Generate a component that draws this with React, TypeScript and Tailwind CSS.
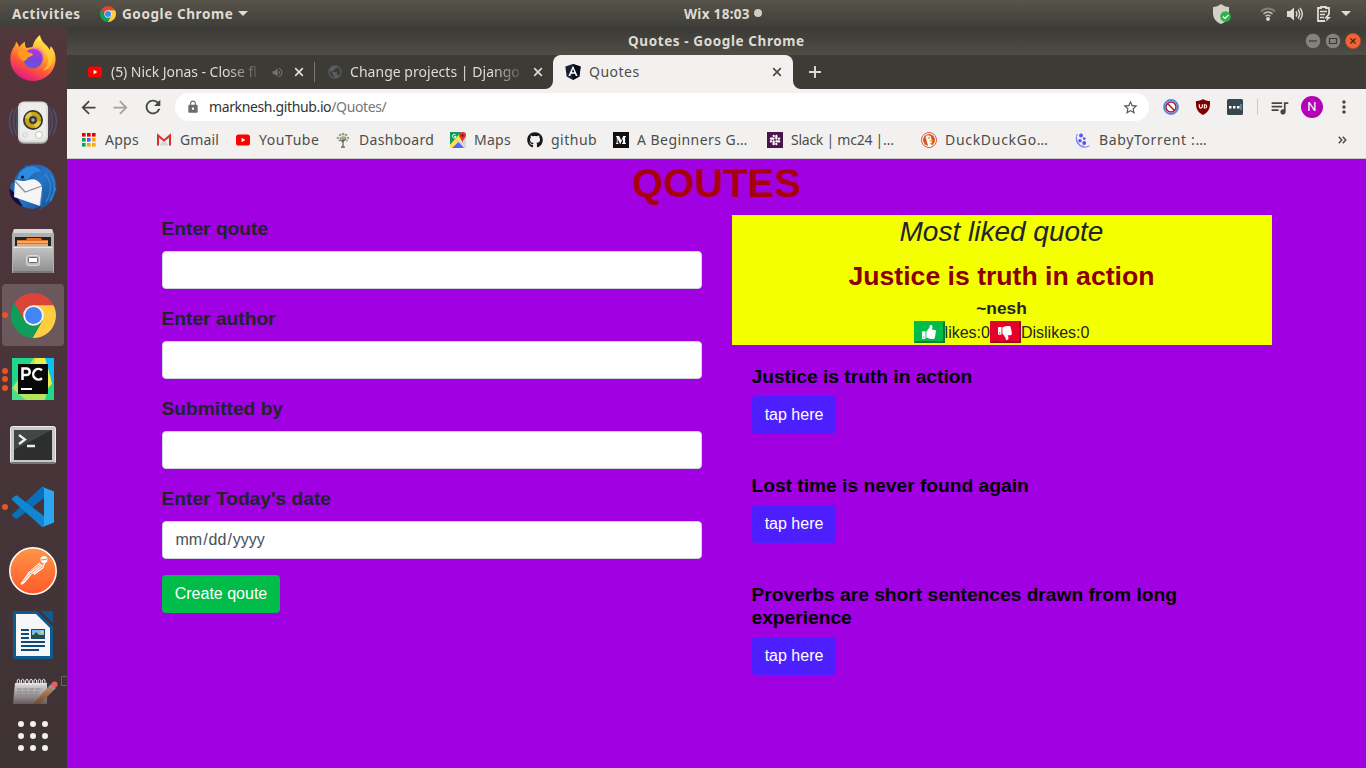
import React from "react";
import { FaGithub, FaSlack, FaThumbsUp, FaThumbsDown } from "react-icons/fa";
import { MdArrowBack, MdArrowForward, MdRefresh, MdLock, MdStarBorder, MdMoreVert, MdQueueMusic, MdVolumeUp, MdPublic } from "react-icons/md";

type IconProps = { size: number };

const Chrome = ({ size }: IconProps) => (
  <svg width={size} height={size} viewBox="0 0 48 48">
    <path d="M14.5 29.5 3.8 11A24 24 0 0 1 45.3 13H24Z" fill="#db4437" />
    <path d="M24 13H45.3A24 24 0 0 1 22.9 48L33.5 29.5Z" fill="#ffcd40" />
    <path d="M33.5 29.5 22.9 48A24 24 0 0 1 3.8 11L14.5 29.5Z" fill="#0f9d58" />
    <circle cx="24" cy="24" r="11" fill="#f4f4f4" />
    <circle cx="24" cy="24" r="9" fill="#4285f4" />
  </svg>
);

const YouTube = () => (
  <svg width="16" height="16" viewBox="0 0 16 16">
    <rect x="1" y="2.5" width="14" height="11" rx="2.6" fill="#f00" />
    <path d="M6.6 5.8v4.4L10.4 8z" fill="#fff" />
  </svg>
);

const Angular = () => (
  <svg width="16" height="16" viewBox="0 0 16 16">
    <path d="M8 0 15.6 2.6 14.4 12.6 8 16 1.6 12.6.4 2.6Z" fill="#1b1f33" />
    <path d="M8 0 15.6 2.6 14.4 12.6 8 16Z" fill="#090c18" />
    <path d="M8 1.8 3.4 12h1.8l.9-2.3h3.8l.9 2.3h1.8ZM8 5.1 9.3 8.2H6.7Z" fill="#fff" fillRule="evenodd" />
  </svg>
);

const AppsGrid = () => (
  <svg width="14" height="14" viewBox="0 0 14 14">
    {["#e60000", "#e60000", "#e60000", "#00a651", "#4d5bf9", "#f5a800", "#00a651", "#f5a800", "#f5a800"].map((c, i) => (
      <rect key={i} x={(i % 3) * 5} y={Math.floor(i / 3) * 5} width="3.6" height="3.6" fill={c} />
    ))}
  </svg>
);

const Gmail = () => (
  <svg width="16" height="16" viewBox="0 0 16 16">
    <path d="M1 2.5h14v11H1z" fill="#ededed" />
    <path d="m3 13.5 5-5 5 5z" fill="#d5d5d5" />
    <path d="M2 13.5V3.500l6 5 6-5v10" fill="none" stroke="#d93025" strokeWidth="2" />
  </svg>
);

const Tree = () => (
  <svg width="16" height="16" viewBox="0 0 16 16">
    <path d="M8 6v9M8 10 5 7.500M8 9.500l3-3M6 15.200h4" stroke="#5f5b49" strokeWidth="1.200" fill="none" />
    <g fill="#94a582">
      <circle cx="8" cy="2.200" r="1.400" /><circle cx="5" cy="3" r="1.200" /><circle cx="11" cy="3" r="1.300" />
      <circle cx="2.800" cy="6" r="1.200" /><circle cx="5.800" cy="6" r="1.200" /><circle cx="10" cy="5.800" r="1.200" /><circle cx="13" cy="6" r="1.200" />
      <circle cx="4.400" cy="8.600" r="1" /><circle cx="11.800" cy="8.600" r="1" /><circle cx="8" cy="5" r="1" />
    </g>
  </svg>
);

const Maps = () => (
  <svg width="16" height="16" viewBox="0 0 16 16">
    <rect width="16" height="16" rx="1" fill="#d8d8d8" />
    <path d="M0 0h11L0 13z" fill="#0f9d58" />
    <path d="M0 13 11 1l3 3L2 16H0z" fill="#ffe14d" />
    <path d="m2 16 6.5-6L14 16z" fill="#5a63f7" />
    <path d="M12.5 0A3.5 3.5 0 0 1 16 3.6C16 6 13 7 12.5 11 12 7 9 6 9 3.6A3.5 3.5 0 0 1 12.5 0Z" fill="#e0352b" />
    <circle cx="12.5" cy="3.5" r="1.2" fill="#7d1a14" />
    <path d="M5.6 3A1.8 1.8 0 1 0 6 4.5H4.3" stroke="#fff" fill="none" />
  </svg>
);

const Medium = () => (
  <svg width="16" height="16" viewBox="0 0 16 16">
    <rect width="16" height="16" fill="#111" />
    <path d="M3 4h3.2L8.2 8.6 10.2 4H13v.6l-.9.8v5.2l.9.8v.6H9v-.6l.9-.8V6.4L7.4 12H7L4.6 6.4v4l1 1.3v.3H2.8v-.3l1-1.3V5.4L3 4.5z" fill="#fff" />
  </svg>
);

const Duck = () => (
  <svg width="16" height="16" viewBox="0 0 16 16">
    <circle cx="8" cy="8" r="7.5" fill="#fff" stroke="#de5833" />
    <circle cx="8" cy="8" r="6" fill="#de5020" />
    <path d="M5 4c2-1.5 5-.6 5.4 2.4L11 13.6c-2 .8-3 .6-4 .2L5.3 7.5C4.8 6 4.5 5 5 4z" fill="#fff" />
    <path d="M8.3 8.2c2-.8 3.6-.6 4 0-.5.9-2.6.8-3.2 1.6z" fill="#fdb913" />
    <path d="M8.5 11.5 12 11l-.6 2.2z" fill="#3fae49" />
    <circle cx="8" cy="6" r=".7" fill="#334" />
  </svg>
);

const Baby = () => (
  <svg width="16" height="16" viewBox="0 0 16 16">
    <g fill="#5558ec">
      <circle cx="6" cy="3.4" r="2" /><circle cx="5" cy="8.8" r="1.8" /><circle cx="9.2" cy="6.6" r="1.4" /><circle cx="9.2" cy="11" r="2" />
    </g>
    <path d="M2.2 2C-.4 8 3 15 8.6 15.2c2.4.2 4.600-1 6-1.200M1.400 6C2 11.500 5.500 14 9.500 14.400" fill="none" stroke="#7779ef" strokeWidth="1" />
  </svg>
);

const Cross = ({ color }: { color: string }) => (
  <svg width="10" height="10" viewBox="0 0 10 10" className="shrink-0">
    <path d="m1.2 1.2 7.6 7.6M8.8 1.2 1.2 8.8" stroke={color} strokeWidth="1.7" />
  </svg>
);

const Firefox = () => (
  <svg width="48" height="48" viewBox="0 0 48 48">
    <defs>
      <linearGradient id="ff" x1=".8" y1=".1" x2=".35" y2="1">
        <stop offset="0" stopColor="#fff44f" /><stop offset=".35" stopColor="#ffa930" /><stop offset=".65" stopColor="#ff5b36" /><stop offset="1" stopColor="#e31587" />
      </linearGradient>
      <linearGradient id="ffg" x1=".6" y1="0" x2=".3" y2="1">
        <stop offset="0" stopColor="#b833e1" /><stop offset=".5" stopColor="#7d43dc" /><stop offset="1" stopColor="#5a5fdf" />
      </linearGradient>
    </defs>
    <path d="M5.5 12c.8-1 1.200-2.500 1.500-4.500 1.500 1.500 2.600 3.500 3.500 5.500 1.500-2.500 3.200-4 5.500-5.300-.2 2.400 0 4.800 1.500 6.300l6-1C24.500 7.500 27.500 3.500 31 1c1 5.500 3.500 8 6.500 10.500 1.500 1.500 2.500 3 3.200 5l1-4.500C45 16 47 20.500 46.500 26 46 38 36 47 24 47S1.500 37.500 1.300 25.500C1.200 20 3 15.500 5.500 12z" fill="url(#ff)" />
    <path d="M35 16c6 7 5 17-2 21 8-1 13-9 10-18-2-4-7-8-11-14-1 5 1 8 3 11z" fill="#ffd23e" opacity=".65" />
    <circle cx="24" cy="24.500" r="9.800" fill="url(#ffg)" />
    <path d="M9 17c4-2.500 8-.5 10 1 1.500 1.200 4 .6 5 2.200-.4 2-3.500 2.300-5 3.300-1.300 1.500-2 3.500-4.500 3.600C11 26 8 21 9 17z" fill="#ff9a1f" />
    <path d="M22 15c7-2.500 13 3 12 10" fill="none" stroke="#e05be8" strokeWidth="1.800" opacity=".6" />
  </svg>
);

const Rhythmbox = () => (
  <svg width="50" height="48" viewBox="0 0 50 48">
    <g fill="none" stroke="#4c6388" strokeWidth="1.500" opacity=".6">
      <path d="M9 8Q2 22 9 37M5 10Q-2 22 5 36M41 8q7 14 0 29M45 10q7 12 0 26M12 5Q5 22 12 40M38 5q7 17 0 35" />
    </g>
    <rect x="10" y="4" width="30" height="41" rx="6" fill="#8e8e8c" />
    <rect x="10" y="2.500" width="30" height="41" rx="6" fill="#dededc" />
    <rect x="12" y="4" width="26" height="37" rx="5" fill="#ededec" />
    <circle cx="25" cy="21" r="10" fill="#33343a" />
    <circle cx="25" cy="21" r="8.200" fill="#c9a411" />
    <path d="M25 21 17 19a8.200 8.200 0 0 1 6-6zM25 21l8 2a8.200 8.200 0 0 1-6 6z" fill="#e0c84b" />
    <circle cx="25" cy="21" r="4" fill="#34363d" /><circle cx="25" cy="21" r="1.800" fill="#a5a8b0" />
    <circle cx="31" cy="36" r="3.500" fill="#fafafa" stroke="#c3c3c1" /><rect x="15" y="34" width="4" height="4" rx="1" fill="none" stroke="#d0d0ce" />
  </svg>
);

const Thunderbird = () => (
  <svg width="48" height="48" viewBox="0 0 48 48">
    <defs><linearGradient id="tb" x1="0" y1="0" x2="1" y2="1"><stop offset="0" stopColor="#1f4f9c" /><stop offset=".5" stopColor="#2476c9" /><stop offset="1" stopColor="#174b90" /></linearGradient></defs>
    <path d="M14 5 18 1l1 2C30-1 41 4 45 13c5 11 1 24-8 30l-7 4 2-4-8 3C12 45 2 38 1 27l1-6 3-2C6 13 9 8 14 5z" fill="url(#tb)" />
    <path d="M18 4c7-2 12 1 14 5-7-1-9 3-14 8-4-2-7-1-10 0 1-6 5-11 10-13z" fill="#2e8be0" />
    <path d="M1 26c0 9 5 14 12 17l-8-13zM5 33l8 10" fill="#190c42" stroke="#190c42" />
    <path d="m6 17 8 1c5 0 9-3 13-1 4 2 6 5 6 8l-2 18L5 34z" fill="#f5f5f5" />
    <path d="M6 18 16 29 33 23" fill="none" stroke="#8a8f9b" strokeWidth="1.300" />
    <circle cx="13.500" cy="14" r="1.600" fill="#111" />
    <path d="M36 11c7 8 7 18 1 28M42 12c5 9 4 18-1 27M33 30l-2 13M47 25l-6 12" fill="none" stroke="#48a3e8" strokeWidth="1.500" opacity=".5" />
  </svg>
);

const Files = () => (
  <svg width="44" height="46" viewBox="0 0 44 46">
    <defs><linearGradient id="fi" x1="0" y1="0" x2="0" y2="1"><stop offset="0" stopColor="#c6c6c6" /><stop offset="1" stopColor="#929292" /></linearGradient></defs>
    <path d="M3 1h38l2 5v39H1V6z" fill="#b0b0b0" /><path d="M3 1h38l1 4H2z" fill="#d8d8d8" />
    <rect x="4" y="9" width="36" height="11" fill="#29231f" />
    <path d="M6 12h9l1-2h14l1 2h6v8H6z" fill="#e4701e" /><path d="M6 14h31M6 17h31" stroke="#f7dfc1" strokeWidth="1.200" />
    <path d="M2 20 4 18h36l2 2v23H2z" fill="url(#fi)" /><path d="M2 19.500h40" stroke="#e3e3e3" />
    <path d="M2 44h40" stroke="#777" strokeWidth="2" />
    <rect x="15.500" y="27.500" width="13" height="10" rx="2" fill="#bcbcbc" stroke="#dcdcdc" />
    <rect x="17.500" y="29.500" width="9" height="5" rx="1" fill="#fff" stroke="#666" />
  </svg>
);

const PyCharm = () => (
  <svg width="42" height="42" viewBox="0 0 42 42">
    <rect width="42" height="42" fill="#21d789" />
    <path d="M22 0h12l5 20-6 22H0V30z" fill="#b4e35c" />
    <path d="M24 0h10l6 26-6 6-12-26z" fill="#e9ee4a" />
    <path d="M33 0h9v30z" fill="#07c3f2" />
    <path d="M0 30 14 42H0z" fill="#4fdc8a" />
    <rect x="6" y="6" width="30" height="30" fill="#080808" />
    <path d="M10.500 22V10.500h4a3 3 0 0 1 0 6.500h-4M30 12.200a5.300 5.300 0 1 0 0 8" fill="none" stroke="#fff" strokeWidth="2.500" />
    <rect x="9" y="30" width="11" height="2" fill="#fff" />
  </svg>
);

const Terminal = () => (
  <svg width="46" height="40" viewBox="0 0 46 40">
    <rect x=".5" y="1.500" width="45" height="37" rx="2" fill="#c9c9c7" stroke="#ededed" />
    <path d="M1 38h44" stroke="#777" strokeWidth="2" />
    <rect x="4" y="5" width="38" height="30" fill="#2d2e2e" />
    <path d="M4 5h38L4 25z" fill="#444645" />
    <path d="m9 10 6 4.500L9 19M17 21h8" fill="none" stroke="#eee" strokeWidth="2.300" />
  </svg>
);

const VsCode = () => (
  <svg width="42" height="42" viewBox="0 0 42 42">
    <path d="M0 28.500 30 .8Q31.500.2 32 1v11L5 32.800H3.500L0 30z" fill="#0a6fb8" />
    <path d="M0 12.500 3.500 9.500H5L32 30v10.500q-1 .8-2.500 0L0 14z" fill="#1287d1" />
    <path d="M30 .800 42 5.500v31L30 41.200q2-.5 2-2.200V3q0-1.500-2-2.200z" fill="#2aa6f2" />
  </svg>
);

const Postman = () => (
  <svg width="48" height="48" viewBox="0 0 48 48">
    <defs><linearGradient id="pm" x1="0" y1="0" x2="0" y2="1"><stop offset="0" stopColor="#ff9547" /><stop offset="1" stopColor="#ff5a2a" /></linearGradient></defs>
    <circle cx="24" cy="24" r="23.200" fill="url(#pm)" stroke="#fff" strokeWidth="1.500" />
    <circle cx="35" cy="12.500" r="3.500" fill="#fff" /><path d="m32 13 6-1" stroke="#ff7b3c" strokeWidth="1.200" />
    <path d="m30.500 15.500 3.500 3-9.500 8.500-6-1z" fill="#fff" />
    <path d="m19.500 25.500 3.500 1.500-8 9.500-3 1.500-.5-1.500z" fill="#fff" />
    <path d="m20 25.500 12-9M22 26.500l10.500-8.500M14 34.500l8-8.500" stroke="#ff7b3c" strokeWidth=".8" />
    <path d="m25 27.500 9-7 2-6" fill="none" stroke="#fff" strokeWidth="1.300" />
  </svg>
);

const Writer = () => (
  <svg width="40" height="48" viewBox="0 0 40 48">
    <path d="M2 0h22l16 16v30q0 2-2 2H2q-2 0-2-2V2Q0 0 2 0z" fill="#0c5c92" />
    <path d="M28 0h10q2 0 2 2v10z" fill="#0c5c92" />
    <path d="M3 3h20l14 14v28H3z" fill="#f6f6f6" />
    <path d="M8 19h8M8 23h8M8 27h8M8 31h24M8 35h24M8 39h18" stroke="#0f4b76" strokeWidth="2" />
    <rect x="18" y="18" width="14" height="10" fill="#0f4b76" /><rect x="19" y="19" width="12" height="5" fill="#79bde8" />
    <path d="m19 26 4-5 4 4 2-1 2 3v0H19z" fill="#35502b" /><circle cx="29" cy="21" r="1.500" fill="#f2d33b" />
  </svg>
);

const Notes = () => (
  <svg width="46" height="26" viewBox="0 0 46 26">
    <defs>
      <linearGradient id="no" x1="0" y1="0" x2="0" y2="1"><stop offset="0" stopColor="#ddd" /><stop offset="1" stopColor="#655b5d" /></linearGradient>
      <linearGradient id="pe" x1="0" y1="0" x2="0" y2="1"><stop offset="0" stopColor="#c88b55" /><stop offset="1" stopColor="#6d4a33" /></linearGradient>
    </defs>
    <path d="M2 5h32v21H0z" fill="url(#no)" />
    <path d="M4 11h25M4 14h22M4 17h20M4 20h16" stroke="#8b8788" strokeDasharray="5 1" />
    {[0, 1, 2, 3, 4, 5, 6].map((i) => <ellipse key={i} cx={5.5 + i * 4.2} cy="4" rx="1.400" ry="2.800" fill="none" stroke="#eee" />)}
    <path d="M20 26 35 9l5 4-13 13z" fill="url(#pe)" /><path d="m35 9 3-3 5 4-3 3z" fill="#8d9699" /><circle cx="41.500" cy="6.500" r="3" fill="#e5625f" />
  </svg>
);

const dock = [
  { icon: <Firefox />, dots: 0 }, { icon: <Rhythmbox />, dots: 0 }, { icon: <Thunderbird />, dots: 0 }, { icon: <Files />, dots: 0 },
  { icon: <Chrome size={45} />, dots: 1, active: true }, { icon: <PyCharm />, dots: 3 },
  { icon: <Terminal />, dots: 0, pad: "pt-[3px]" }, { icon: <VsCode />, dots: 1 }, { icon: <Postman />, dots: 0 }, { icon: <Writer />, dots: 0 },
];

const bookmarks = [
  { label: "Apps", icon: <AppsGrid />, box: "w-[75px]", text: "tracking-[0.25px]" },
  { label: "Gmail", icon: <Gmail />, box: "w-[79px]", text: "tracking-[0.15px]" },
  { label: "YouTube", icon: <YouTube />, box: "w-[100px]", text: "tracking-[0.55px]" },
  { label: "Dashboard", icon: <Tree />, box: "w-[115px]", text: "tracking-[0.3px]" },
  { label: "Maps", icon: <Maps />, box: "w-[77px]", text: "tracking-[0.25px]" },
  { label: "github", icon: <FaGithub size={16} color="#181717" />, box: "w-[86px]", text: "tracking-[0.5px]" },
  { label: "A Beginners G…", icon: <Medium />, box: "w-[154px]", text: "tracking-[0.45px]" },
  { label: "Slack | mc24 |…", icon: <span className="flex h-4 w-4 items-center justify-center bg-[#4a154b]"><FaSlack size={12} color="#fff" /></span>, box: "w-[154px]", text: "tracking-[-0.25px]" },
  { label: "DuckDuckGo…", icon: <Duck />, box: "w-[154px]", text: "tracking-[0.7px]" },
  { label: "BabyTorrent :…", icon: <Baby />, box: "w-[160px]", text: "tracking-[0.65px]" },
];

const quotes = ["Justice is truth in action", "Lost time is never found again", "Proverbs are short sentences drawn from long experience"];

const TopBar = () => (
  <header className="flex h-7 shrink-0 items-center bg-linear-to-b from-[#58544b] to-[#3e3d39] text-[13.500px] font-bold text-[#dfdbd2]">
    <div className="flex w-[684px] items-center pl-3">
      <span className="w-[88px] whitespace-nowrap tracking-[0.6px]">Activities</span>
      <Chrome size={16} />
      <span className="ml-[6px] w-[116px] whitespace-nowrap tracking-[0.600px]">Google Chrome</span>
      <svg width="10" height="5" viewBox="0 0 10 5" className="mb-px"><path d="M0 0h10L5 5z" fill="#dfdbd2" /></svg>
    </div>
    <span className="w-[70px] whitespace-nowrap tracking-[0.3px]">Wix 18:03</span>
    <span className="mb-[2px] h-2 w-2 rounded-full bg-[#cfccc5]" />
    <div className="ml-auto flex items-center pr-[15px] pb-px">
      <svg width="20" height="22" viewBox="0 0 20 22" className="mr-[28px]">
        <path d="M9 1c2.500 2 5 2.800 8 3v6c0 5-3 9-8 11-5-2-8-6-8-11V4c3-.2 5.500-1 8-3z" fill="#d3d0ca" />
        <circle cx="13.500" cy="13.500" r="5.300" fill="#2db34a" /><path d="m11 13.500 2 2 3.500-3.500" fill="none" stroke="#fff" strokeWidth="1.200" />
      </svg>
      <svg width="16" height="14" viewBox="0 0 16 14" className="mr-[11px]">
        <path d="M1 4.500Q8-1.500 15 4.500" fill="none" stroke="#85827a" strokeWidth="1.800" />
        <path d="M3.500 7Q8 3 12.500 7M5.500 9.300Q8 7.200 10.500 9.300" fill="none" stroke="#c5c2bb" strokeWidth="1.500" /><circle cx="8" cy="12" r="1.900" fill="#dfdbd2" />
      </svg>
      <svg width="16" height="14" viewBox="0 0 16 14" className="mr-[14px]">
        <path d="M0 4h3l4-3.500v13L3 10H0z" fill="#dfdbd2" /><path d="M9 4.500q1.700 2.500 0 5M11 2.500q3.300 4.500 0 9M13 1q4.600 6 0 12" fill="none" stroke="#dfdbd2" strokeWidth="1.400" />
      </svg>
      <svg width="15" height="16" viewBox="0 0 15 16" className="mr-[9px]">
        <path d="M12 8V2H9V1H4v1H1v13h7" fill="none" stroke="#dfdbd2" strokeWidth="1.800" /><path d="M3 5.500h7M3 8.500h5M3 11.500h4" stroke="#dfdbd2" strokeWidth="1.400" />
        <path d="m11 8-4 4.500h3L8.500 16l5.500-5h-3l2-3z" fill="#dfdbd2" />
      </svg>
      <svg width="10" height="5" viewBox="0 0 10 5"><path d="M0 0h10L5 5z" fill="#dfdbd2" /></svg>
    </div>
  </header>
);

const Dock = () => (
  <aside className="flex w-[67px] shrink-0 flex-col overflow-hidden bg-linear-to-b from-[#51363a] via-[#48343a] to-[#3e3334]">
    {dock.map((d, i) => (
      <div key={i} className={`relative flex w-[66px] shrink-0 items-center justify-center ${i === 0 ? "h-[63px] pb-[4px]" : "h-[64px]"}`}>
        {d.active && <span className="absolute top-[1px] left-[2px] h-[62px] w-[62px] rounded-[4px] bg-[#6a585d]" />}
        <div className="absolute left-[2px] flex flex-col gap-[2.500px]">
          {Array.from({ length: d.dots }, (_, n) => <span key={n} className="h-[6px] w-[6px] rounded-full bg-[#e95420]" />)}
        </div>
        <div className={`relative ${d.pad ?? ""}`}>{d.icon}</div>
      </div>
    ))}
    <div className="flex h-[37px] shrink-0 items-end pb-0 pl-[13px]">
      <Notes />
      <svg width="6" height="10" viewBox="0 0 6 10" className="mb-[18px] ml-[2px] shrink-0"><path d="M6 .5H.5v9H6" fill="none" stroke="#6a6657" /></svg>
    </div>
    <div className="flex h-[64px] w-[66px] shrink-0 items-center justify-center">
      <div className="grid grid-cols-3 gap-[6px]">
        {Array.from({ length: 9 }, (_, i) => <span key={i} className="h-[6px] w-[6px] rounded-full bg-[#f2f0ef]" />)}
      </div>
    </div>
  </aside>
);

const TitleBar = () => (
  <div className="flex h-[27px] shrink-0 items-center bg-linear-to-b from-[#3b3a36] to-[#504d46]">
    <span className="ml-[561px] whitespace-nowrap text-[13.500px] font-bold tracking-[0.600px] text-[#dfdbd2]">Quotes - Google Chrome</span>
    <div className="mr-[5px] ml-auto flex gap-1 pb-px">
      {[<path d="M4 8h8" />, <path d="M4.500 5.500h7v5h-7z" />, <path d="m5.500 5.500 5 5M10.500 5.500l-5 5" />].map((p, i) => (
        <svg key={i} width="16" height="16" viewBox="0 0 16 16">
          <circle cx="8" cy="8" r="7.700" fill={i === 2 ? "#ee6436" : "#85827b"} stroke={i === 2 ? "#b8401d" : "#35342f"} strokeWidth=".6" />
          <g fill="none" stroke={i === 2 ? "#4d1d0b" : "#3a3934"} strokeWidth="1.200">{p}</g>
        </svg>
      ))}
    </div>
  </div>
);

const Tabs = () => (
  <div className="flex h-[34px] shrink-0 items-center bg-[#3c3b36] text-[14px] text-[#dfdbd2]">
    <div className="flex w-[247px] items-center pl-5">
      <YouTube />
      <span className="ml-[8px] w-[153px] overflow-hidden pb-[2px] whitespace-nowrap tracking-[-0.05px] mask-r-from-75% mask-r-to-100%">(5) Nick Jonas - Close fl</span>
      <MdVolumeUp size={13} className="mr-[10px] ml-[7px] text-[#74736d]" />
      <Cross color="#dfdbd2" />
    </div>
    <div className="flex h-full w-[239px] items-center">
      <span className="h-5 w-px bg-[#77756d]" />
      <MdPublic size={16} className="mr-[7px] ml-[12px] text-[#5b5c5e]" />
      <span className="w-[177px] overflow-hidden pb-[2px] whitespace-nowrap tracking-[0.03px] mask-r-from-80% mask-r-to-100%">Change projects | Django s</span>
      <span className="ml-[6px] flex"><Cross color="#dfdbd2" /></span>
    </div>
    <div className="relative flex h-full w-[240px] items-center rounded-t-lg bg-[#f2f1f0] pl-3 text-[#4d4d4b]">
      <svg width="8" height="8" className="absolute bottom-0 -left-2"><path d="M8 0v8H0A8 8 0 0 0 8 0" fill="#f2f1f0" /></svg>
      <svg width="8" height="8" className="absolute -right-2 bottom-0"><path d="M0 0v8h8A8 8 0 0 1 0 0" fill="#f2f1f0" /></svg>
      <Angular />
      <span className="ml-2 flex-1 pb-[2px] tracking-[0.500px]">Quotes</span>
      <span className="mr-[11px] flex"><Cross color="#4d4d4b" /></span>
    </div>
    <svg width="12" height="12" viewBox="0 0 12 12" className="ml-4"><path d="M6 0v12M0 6h12" stroke="#dfdbd2" strokeWidth="1.900" /></svg>
  </div>
);

const Toolbar = () => (
  <div className="flex h-9 shrink-0 items-center bg-[#f2f1f0] text-[#454543]">
    <MdArrowBack size={21} className="ml-[11px]" />
    <MdArrowForward size={21} className="ml-[11px] text-[#a3a2a0]" />
    <MdRefresh size={22} className="ml-[11px]" />
    <div className="ml-[11px] flex h-7 w-[974px] items-center rounded-full bg-white pr-[10px] pl-[11px]">
      <MdLock size={14} className="text-[#6b6b6b]" />
      <span className="ml-[9px] flex-1 pb-px whitespace-nowrap text-[14px] tracking-[-0.37px] text-[#333]">marknesh.github.io<span className="text-[#777]">/Quotes/</span></span>
      <MdStarBorder size={17} className="text-[#555]" />
    </div>
    <svg width="16" height="16" viewBox="0 0 16 16" className="ml-[14px]">
      <circle cx="8" cy="8" r="6.900" fill="#fff" stroke="#5387dc" strokeWidth="2" /><circle cx="8" cy="8" r="5" fill="none" stroke="#a3202c" strokeWidth="1.500" /><path d="m4.500 4.500 7 7" stroke="#a3202c" strokeWidth="1.500" />
    </svg>
    <svg width="16" height="16" viewBox="0 0 16 16" className="ml-4">
      <path d="M8 0c2 1.500 4.500 2 7 2 .3 7-1 11-7 14C2 13 .7 9 1 2c2.500 0 5-.5 7-2z" fill="#800000" />
      <path d="M4.300 5.200v2.300q0 1.600 1.500 1.600t1.500-1.600V5.200M9.300 5.800h.8a1.600 1.600 0 0 1 0 3.200h-.8z" fill="none" stroke="#fff" strokeWidth="1.100" />
    </svg>
    <svg width="16" height="16" viewBox="0 0 16 16" className="ml-4">
      <rect width="16" height="16" rx="1.500" fill="#37474f" /><path d="M2 7h2.500v2.500H2zM6 7h2.500v2.500H6zM10 7h2.500v2.500H10z" fill="#fff" /><path d="M14 5v6" stroke="#aab5ba" />
    </svg>
    <span className="ml-[14px] h-4 w-px bg-[#cccbc9]" />
    <MdQueueMusic size={21} className="ml-[11px]" />
    <span className="ml-[11px] flex h-[22px] w-[22px] items-center justify-center rounded-full bg-[#b500b5] font-['Roboto',sans-serif] text-[13px] text-white">N</span>
    <MdMoreVert size={20} className="ml-[11px]" />
  </div>
);

const Bookmarks = () => (
  <div className="flex h-[34px] shrink-0 items-center border-b border-[#c9c8c6] bg-[#f2f1f0] pb-[4px] pl-[14px] text-[14px] text-[#4d4d4b]">
    {bookmarks.map((b) => (
      <div key={b.label} className={`flex shrink-0 items-center gap-2 ${b.box}`}>
        <span className="flex w-4 shrink-0 justify-center">{b.icon}</span>
        <span className={`whitespace-nowrap ${b.text}`}>{b.label}</span>
      </div>
    ))}
    <svg width="9" height="8" viewBox="0 0 9 8" className="mr-[19px] ml-auto"><path d="m.8.800 3 3.200-3 3.200M4.800.8l3 3.200-3 3.200" fill="none" stroke="#4d4d4b" strokeWidth="1.500" /></svg>
  </div>
);

const Field = ({ label, children }: { label: string; children?: React.ReactNode }) => (
  <label className="mb-4 block">
    <span className="mb-2 block text-[19.200px] leading-7 font-bold">{label}</span>
    <span className="flex h-[38px] items-center rounded-[4px] border border-[#ced4da] bg-white px-[13px] text-base text-[#495057]">{children}</span>
  </label>
);

const Page = () => (
  <main className="flex-1 overflow-hidden bg-[#a000e2] font-['Liberation_Sans',Arial,sans-serif] text-[#212529]">
    <h1 className="mb-2 text-center text-[40px] leading-[48px] font-bold text-[#a90010]">QOUTES</h1>
    <div className="mx-auto grid w-[1110px] grid-cols-2 gap-[30px]">
      <form>
        <Field label="Enter qoute" />
        <Field label="Enter author" />
        <Field label="Submitted by" />
        <Field label="Enter Today's date"><span>mm<span className="px-[1px]">/</span>dd<span className="px-[1px]">/</span>yyyy</span></Field>
        <button type="button" className="h-[38px] w-[118px] rounded-[4px] bg-[#00bc48] pl-px text-base text-white">Create qoute</button>
      </form>
      <section>
        <div className="flex h-[130px] flex-col items-center bg-[#f4ff00]">
          <h3 className="mb-2 text-[28px] leading-[33.600px] italic">Most liked quote</h3>
          <p className="text-[26.600px] leading-[39px] font-bold text-[#8b0000]">Justice is truth in action</p>
          <p className="text-[17.300px] leading-[25.500px] font-bold">~nesh</p>
          <div className="flex h-[22px] items-center text-base">
            <button type="button" className="flex h-[22px] w-[31px] items-center justify-center border-2 border-t-[#00bc48] border-r-[#067d35] border-b-[#067d35] border-l-[#00bc48] bg-[#00bc48]"><FaThumbsUp size={14} color="#fff" /></button>
            <span className="pt-[2px]">likes:0</span>
            <button type="button" className="flex h-[22px] w-[31px] items-center justify-center border-2 border-t-[#e4002b] border-r-[#970824] border-b-[#970824] border-l-[#e4002b] bg-[#e4002b]"><FaThumbsDown size={14} color="#fff" className="mt-px" /></button>
            <span className="pt-[2px]">Dislikes:0</span>
          </div>
        </div>
        <ul className="px-5 pt-5">
          {quotes.map((q) => (
            <li key={q} className="mb-10">
              <h5 className="mb-2 text-[19.200px] leading-[23px] font-bold text-black">{q}</h5>
              <button type="button" className="block h-[38px] w-[84px] rounded-[4px] bg-[#4d1fff] pl-px text-base text-white">tap here</button>
            </li>
          ))}
        </ul>
      </section>
    </div>
  </main>
);

export default function App() {
  return (
    <div className="flex h-[768px] w-[1366px] flex-col overflow-hidden font-['Noto_Sans',sans-serif]">
      <TopBar />
      <div className="flex min-h-0 flex-1">
        <Dock />
        <div className="flex min-w-0 flex-1 flex-col">
          <TitleBar />
          <Tabs />
          <Toolbar />
          <Bookmarks />
          <Page />
        </div>
      </div>
    </div>
  );
}
